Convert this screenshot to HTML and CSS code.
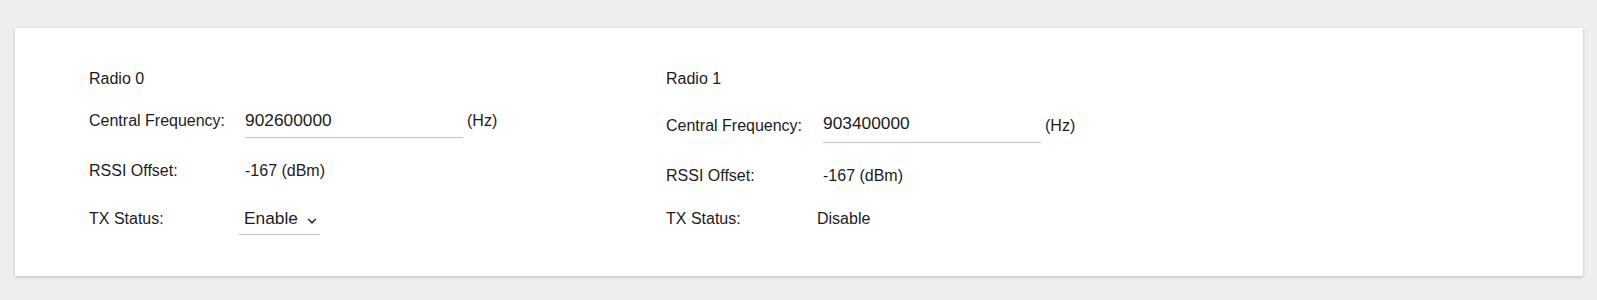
FILE: index.html
```html
<!DOCTYPE html>
<html lang="en">
<head>
    <meta charset="UTF-8">
    <title>Radio Settings</title>
    <link rel="stylesheet" href="styles.css">
</head>
<body>

    <div class="page">
        <div class="card">

            <div class="radio">
                <div class="row row-title">Radio 0</div>
                <div class="row row-freq">
                    <span class="label">Central Frequency:</span>
                    <input class="freq-input" type="text" value="902600000">
                    <span class="unit">(Hz)</span>
                </div>
                <div class="row row-rssi">
                    <span class="label">RSSI Offset:</span>
                    <span class="value">-167 (dBm)</span>
                </div>
                <div class="row row-tx">
                    <span class="label">TX Status:</span>
                    <div class="select">
                        <span class="select-text">Enable</span>
                        <svg class="chevron" width="10" height="6" viewBox="0 0 10 6">
                            <path d="M1.2 1 L5 4.8 L8.8 1" fill="none" stroke="#333" stroke-width="1.6"/>
                        </svg>
                    </div>
                </div>
            </div>

            <div class="radio radio-second">
                <div class="row row-title">Radio 1</div>
                <div class="row row-freq">
                    <span class="label">Central Frequency:</span>
                    <input class="freq-input" type="text" value="903400000">
                    <span class="unit">(Hz)</span>
                </div>
                <div class="row row-rssi">
                    <span class="label">RSSI Offset:</span>
                    <span class="value">-167 (dBm)</span>
                </div>
                <div class="row row-tx">
                    <span class="label">TX Status:</span>
                    <span class="value value-disabled">Disable</span>
                </div>
            </div>

        </div>
    </div>

</body>
</html>
```

FILE: styles.css
```css
body {
    margin: 0;
    font-family: "Liberation Sans", Arial, sans-serif;
    background-color: #eeeeee;
    color: #1c1c1c;
    font-size: 16px;
}

.page {
    padding: 28px 14px 24px 15px;
}

.card {
    background-color: #fff;
    box-shadow: 0 1px 3px rgba(0, 0, 0, 0.22);
    height: 248px;
    box-sizing: border-box;
    padding: 32px 0 0 74px;
    display: grid;
    grid-template-columns: 577px 1fr;
}

.row {
    display: flex;
    align-items: center;
}

.row-title { height: 37px; }
.row-freq  { height: 48px; }
.row-rssi  { height: 52px; }
.row-tx    { height: 44px; }

.radio-second .row-freq { height: 58px; }
.radio-second .row-rssi { height: 42px; }

.label {
    width: 156px;
    flex-shrink: 0;
}

.radio-second .label {
    width: 157px;
}

.freq-input {
    width: 218px;
    height: 34px;
    box-sizing: border-box;
    padding: 0;
    border: none;
    border-bottom: 1px solid #c2c2c2;
    outline: none;
    font-family: "Liberation Sans", Arial, sans-serif;
    font-size: 17.33px;
    color: #1c1c1c;
    background: transparent;
}

.radio-second .freq-input {
    padding-bottom: 5px;
}

.unit {
    margin-left: 4px;
}

.select {
    display: flex;
    align-items: center;
    width: 81px;
    height: 32px;
    margin-left: -6px;
    padding-left: 5px;
    box-sizing: border-box;
    border-bottom: 1px solid #c2c2c2;
    font-size: 17.33px;
}

.chevron {
    margin-left: 9px;
    margin-top: 4px;
}

.value-disabled {
    margin-left: -6px;
}
```
